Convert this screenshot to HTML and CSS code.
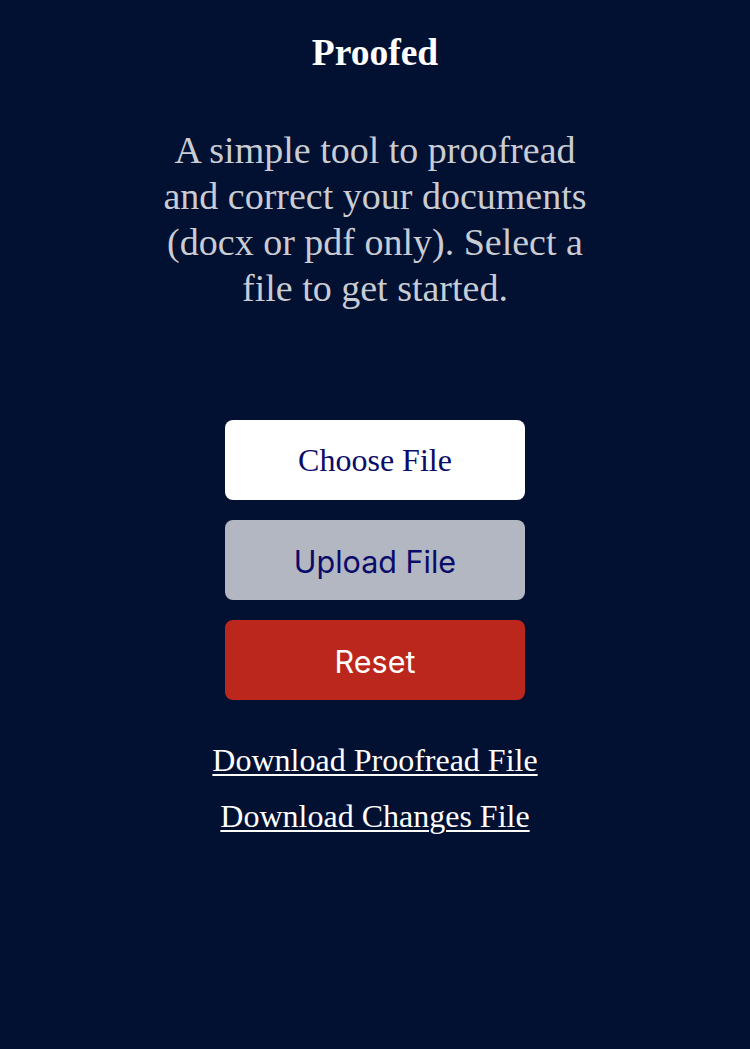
FILE: index.html
```html
<!DOCTYPE html>
<html lang="en">
<head>
<meta charset="utf-8">
<title>Proofed</title>
<link rel="stylesheet" href="styles.css">
</head>
<body>
<main class="app">
  <h1 class="title">Proofed</h1>
  <p class="intro">A simple tool to proofread and correct your documents (docx or pdf only). Select a file to get started.</p>
  <div class="actions">
    <button class="btn btn-choose">Choose File</button>
    <button class="btn btn-upload">Upload File</button>
    <button class="btn btn-reset">Reset</button>
  </div>
  <div class="links">
    <a class="link" href="#">Download Proofread File</a>
    <a class="link" href="#">Download Changes File</a>
  </div>
</main>
</body>
</html>
```
FILE: styles.css
```css
html, body {
  margin: 0;
  padding: 0;
  background: #021032;
}
body {
  min-height: 1049px;
  font-family: "Liberation Serif", "Times New Roman", serif;
}
.app {
  display: flex;
  flex-direction: column;
  align-items: center;
  padding-top: 32px;
}
.title {
  margin: 0;
  font-size: 37.5px;
  line-height: 42px;
  font-weight: bold;
  color: #ffffff;
}
.intro {
  margin: 53px 0 0;
  width: 450px;
  text-align: center;
  font-size: 38px;
  line-height: 46px;
  color: #c9ccd3;
}
.actions {
  margin-top: 109px;
  display: flex;
  flex-direction: column;
  gap: 20px;
}
.btn {
  width: 300px;
  height: 80px;
  border: none;
  border-radius: 8px;
  padding: 3px 0 0;
  font-size: 30.5px;
  font-family: Inter, "Liberation Sans", sans-serif;
  color: #0b0b6a;
}
.btn-choose {
  background: #ffffff;
  font-family: "Liberation Serif", "Times New Roman", serif;
  font-size: 32px;
  padding-top: 1px;
}
.btn-upload {
  background: #b3b7c2;
}
.btn-reset {
  background: #bb271d;
  color: #ffffff;
}
.links {
  margin-top: 32px;
  display: flex;
  flex-direction: column;
  align-items: center;
}
.link {
  font-size: 32px;
  line-height: 56px;
  color: #ffffff;
  text-decoration: underline;
  text-decoration-thickness: 2px;
  text-underline-offset: 3px;
}
```
